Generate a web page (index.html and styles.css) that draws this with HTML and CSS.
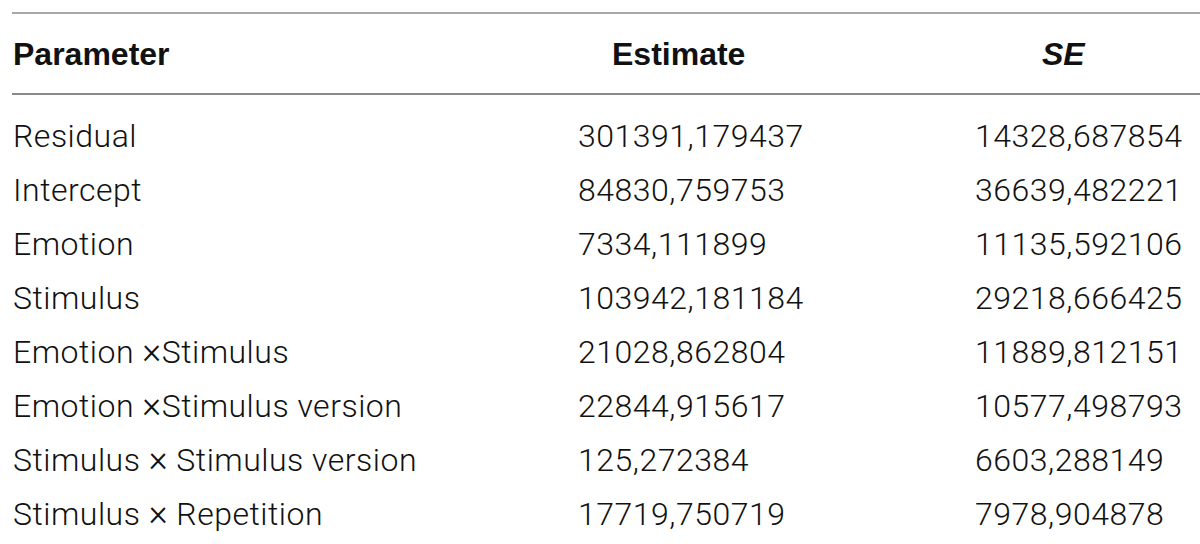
FILE: index.html
```html
<!DOCTYPE html>
<html>
<head>
<meta charset="utf-8">
<link rel="stylesheet" href="styles.css">
</head>
<body>
<div class="table">
  <div class="row head">
    <div class="c1">Parameter</div>
    <div class="c2">Estimate</div>
    <div class="c3"><i>SE</i></div>
  </div>
  <div class="body">
    <div class="row"><div class="c1">Residual</div><div class="c2">301391,179437</div><div class="c3">14328,687854</div></div>
    <div class="row"><div class="c1">Intercept</div><div class="c2">84830,759753</div><div class="c3">36639,482221</div></div>
    <div class="row"><div class="c1">Emotion</div><div class="c2">7334,111899</div><div class="c3">11135,592106</div></div>
    <div class="row"><div class="c1">Stimulus</div><div class="c2">103942,181184</div><div class="c3">29218,666425</div></div>
    <div class="row"><div class="c1">Emotion <span class="x">×</span>Stimulus</div><div class="c2">21028,862804</div><div class="c3">11889,812151</div></div>
    <div class="row"><div class="c1">Emotion <span class="x">×</span>Stimulus version</div><div class="c2">22844,915617</div><div class="c3">10577,498793</div></div>
    <div class="row"><div class="c1">Stimulus <span class="x">×</span> Stimulus version</div><div class="c2">125,272384</div><div class="c3">6603,288149</div></div>
    <div class="row"><div class="c1">Stimulus <span class="x">×</span> Repetition</div><div class="c2">17719,750719</div><div class="c3">7978,904878</div></div>
  </div>
</div>
</body>
</html>
```

FILE: styles.css
```css
html, body {
  margin: 0;
  padding: 0;
  background: #ffffff;
}
body {
  font-family: Roboto, "Liberation Sans", Arial, sans-serif;
  font-weight: 300;
  color: #111111;
  font-size: 32px;
  letter-spacing: 0.5px;
}
.table {
  margin-top: 12px;
  margin-left: 12px;
  border-top: 2px solid #a8a8a8;
}
.row {
  display: grid;
  grid-template-columns: 566px 397px 1fr;
  line-height: 54px;
  white-space: nowrap;
}
.c1 { padding-left: 1px; }
.x {
  font-size: 36px;
  line-height: 0;
}
.head {
  font-family: "Liberation Sans", Arial, sans-serif;
  font-weight: bold;
  letter-spacing: 0;
  color: #111;
  padding: 13px 0 12px;
  border-bottom: 2px solid #8a8a8a;
}
.head .c2 { padding-left: 34px; }
.head .c3 { padding-left: 67px; }
.body {
  padding-top: 14px;
}
```
